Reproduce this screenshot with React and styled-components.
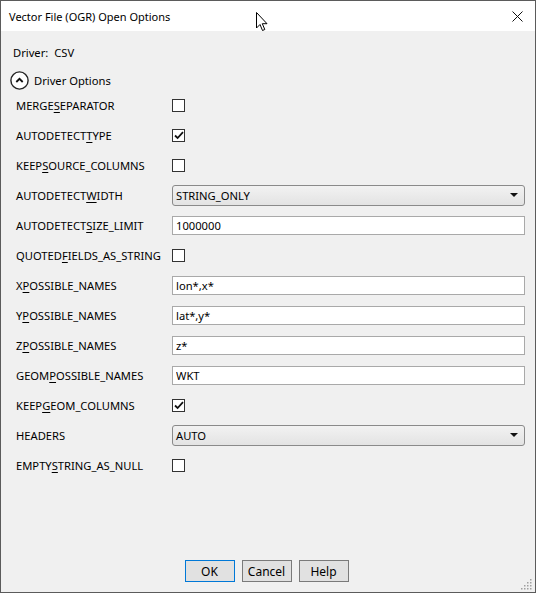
import React, { useState } from 'react'
import styled, { createGlobalStyle } from 'styled-components'

const GlobalStyle = createGlobalStyle`
  html, body {
    margin: 0;
    padding: 0;
    background: #f0f0f0;
  }
  * {
    box-sizing: border-box;
  }
`

const Window = styled.div`
  position: relative;
  width: 536px;
  height: 593px;
  border: 1px solid #5b5b5b;
  display: flex;
  flex-direction: column;
  font-family: "Noto Sans", "Open Sans", sans-serif;
  font-size: 11.2px;
  color: #000;
  background: #f0f0f0;
`

const TitleBar = styled.div`
  height: 30px;
  flex: none;
  background: #fff;
  display: flex;
  align-items: center;
  justify-content: space-between;
  padding: 0 12px 0 8px;
`

const Title = styled.span`
  font-size: 11px;
`

const CloseButton = styled.svg`
  width: 11px;
  height: 11px;
`

const Body = styled.div`
  flex: 1;
  display: flex;
  flex-direction: column;
  padding: 13px 10px 10px 9px;
`

const DriverLine = styled.div`
  display: flex;
  gap: 6px;
  padding-left: 3px;
  height: 16px;
  align-items: center;
`

const SectionHeader = styled.div`
  display: flex;
  align-items: center;
  gap: 5px;
  height: 20px;
  margin-top: 10px;
`

const Options = styled.div`
  display: grid;
  grid-template-columns: 156px 1fr;
  grid-auto-rows: 30px;
  padding-left: 6px;
`

const Label = styled.div`
  display: flex;
  align-items: center;
  white-space: nowrap;

  u {
    text-decoration: underline;
    text-underline-offset: 2px;
  }
`

const Field = styled.div`
  display: flex;
  align-items: center;
`

const Check = styled.div`
  width: 13px;
  height: 13px;
  border: 1px solid #333;
  background: #fff;
  display: flex;
  align-items: center;
  justify-content: center;
`

const TextInput = styled.input`
  width: 100%;
  height: 19px;
  border: 1px solid #a9a9a9;
  background: #fff;
  font: inherit;
  padding: 0 3px;
  outline: none;
`

const Combo = styled.div`
  width: 100%;
  height: 21px;
  border: 1px solid #8a8a8a;
  border-radius: 3px;
  background: linear-gradient(#f2f2f2, #e3e3e3);
  display: flex;
  align-items: center;
  justify-content: space-between;
  padding: 0 6px 0 3px;
`

const Arrow = styled.span`
  width: 0;
  height: 0;
  border-left: 4px solid transparent;
  border-right: 4px solid transparent;
  border-top: 4px solid #111;
`

const Spacer = styled.div`
  flex: 1;
`

const ButtonRow = styled.div`
  display: flex;
  justify-content: center;
  gap: 7px;
  padding-right: 2px;
`

const Button = styled.button`
  width: 50px;
  height: 22px;
  font: inherit;
  font-size: 12px;
  background: #e1e1e1;
  border: 1px solid ${p => (p.$default ? '#0078d7' : '#7a7a7a')};
  padding: 0;
  color: #000;
`

const Grip = styled.svg`
  position: absolute;
  right: 2px;
  bottom: 2px;
`

const Cursor = styled.svg`
  position: absolute;
  left: 255px;
  top: 11px;
`

const options = [
  { name: ['MERGE', 'S', 'EPARATOR'], type: 'check', value: false },
  { name: ['AUTODETECT', 'T', 'YPE'], type: 'check', value: true },
  { name: ['KEEP', 'S', 'OURCE_COLUMNS'], type: 'check', value: false },
  { name: ['AUTODETECT', 'W', 'IDTH'], type: 'combo', value: 'STRING_ONLY' },
  { name: ['AUTODETECT', 'S', 'IZE_LIMIT'], type: 'text', value: '1000000' },
  { name: ['QUOTED', 'F', 'IELDS_AS_STRING'], type: 'check', value: false },
  { name: ['X', 'P', 'OSSIBLE_NAMES'], type: 'text', value: 'lon*,x*' },
  { name: ['Y', 'P', 'OSSIBLE_NAMES'], type: 'text', value: 'lat*,y*' },
  { name: ['Z', 'P', 'OSSIBLE_NAMES'], type: 'text', value: 'z*' },
  { name: ['GEOM', 'P', 'OSSIBLE_NAMES'], type: 'text', value: 'WKT' },
  { name: ['KEEP', 'G', 'EOM_COLUMNS'], type: 'check', value: true },
  { name: ['HEADERS', '', ''], type: 'combo', value: 'AUTO' },
  { name: ['EMPTY', 'S', 'TRING_AS_NULL'], type: 'check', value: false },
]

function Checkbox({ checked }) {
  return (
    <Check>
      {checked && (
        <svg width="10" height="9" viewBox="0 0 10 9">
          <path d="M1 4.5 L3.6 7 L9 1.2" fill="none" stroke="#111" strokeWidth="1.8" />
        </svg>
      )}
    </Check>
  )
}

function OptionField({ opt }) {
  const [val, setVal] = useState(opt.value)
  if (opt.type === 'check') return <Checkbox checked={val} />
  if (opt.type === 'combo')
    return (
      <Combo>
        <span>{val}</span>
        <Arrow />
      </Combo>
    )
  return <TextInput value={val} onChange={e => setVal(e.target.value)} />
}

export default function App() {
  return (
    <>
      <GlobalStyle />
      <Window>
        <TitleBar>
          <Title>Vector File (OGR) Open Options</Title>
          <CloseButton viewBox="0 0 11 11">
            <path d="M0.5 0.5 L10.5 10.5 M10.5 0.5 L0.5 10.5" stroke="#111" strokeWidth="1" />
          </CloseButton>
        </TitleBar>
        <Body>
          <DriverLine>
            <span>Driver:</span>
            <span>CSV</span>
          </DriverLine>
          <SectionHeader>
            <svg width="19" height="19" viewBox="0 0 19 19">
              <circle cx="9.5" cy="9.5" r="8.6" fill="#fff" stroke="#222" strokeWidth="1.4" />
              <path d="M6.3 11 L9.5 7.8 L12.7 11" fill="none" stroke="#111" strokeWidth="1.8" />
            </svg>
            <span>Driver Options</span>
          </SectionHeader>
          <Options>
            {options.map((opt, i) => (
              <React.Fragment key={i}>
                <Label>
                  {opt.name[0]}
                  {opt.name[1] && <u>{opt.name[1]}</u>}
                  {opt.name[2]}
                </Label>
                <Field>
                  <OptionField opt={opt} />
                </Field>
              </React.Fragment>
            ))}
          </Options>
          <Spacer />
          <ButtonRow>
            <Button $default>OK</Button>
            <Button>Cancel</Button>
            <Button>Help</Button>
          </ButtonRow>
        </Body>
        <Grip width="12" height="12" viewBox="0 0 12 12">
          {[[10, 2], [10, 5], [7, 5], [10, 8], [7, 8], [4, 8], [10, 11], [7, 11], [4, 11], [1, 11]].map(([x, y], i) => (
            <rect key={i} x={x - 1} y={y - 1} width="1.5" height="1.5" fill="#a0a0a0" />
          ))}
        </Grip>
        <Cursor width="13" height="20" viewBox="0 0 13 20">
          <path d="M0.5 0.5 L0.5 16 L4 12.5 L6.5 18.5 L8.8 17.5 L6.3 11.7 L11 11.7 Z" fill="#fff" stroke="#000" strokeWidth="1" />
        </Cursor>
      </Window>
    </>
  )
}
